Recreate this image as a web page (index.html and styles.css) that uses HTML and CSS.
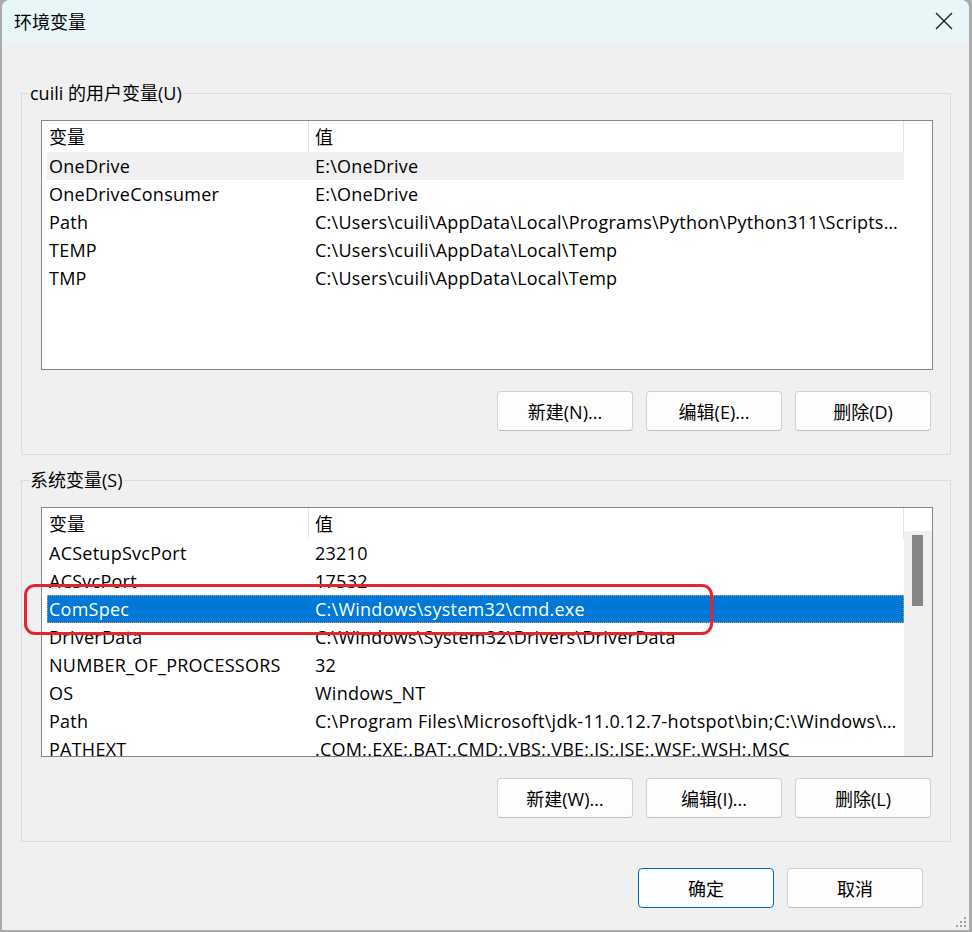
FILE: index.html
```html
<!DOCTYPE html>
<html lang="zh-CN">
<head>
  <meta charset="UTF-8">
  <title>环境变量</title>
  <link rel="stylesheet" href="styles.css">
</head>
<body>
  <div class="window">
    <div class="titlebar">
      <span class="title">环境变量</span>
      <svg class="close" width="18" height="18" viewBox="0 0 18 18">
        <path d="M1 1 L17 17 M17 1 L1 17" stroke="#1b1b1b" stroke-width="1.3" fill="none"/>
      </svg>
    </div>

    <div class="content">
      <fieldset class="group">
        <legend>cuili 的用户变量(U)</legend>
        <div class="listview">
          <div class="lv-main">
            <div class="lv-header">
              <div class="hcol hcol-name">变量</div>
              <div class="hcol hcol-value">值</div>
            </div>
            <div class="lv-rows">
              <div class="row hot"><span>OneDrive</span><span>E:\OneDrive</span></div>
              <div class="row"><span>OneDriveConsumer</span><span>E:\OneDrive</span></div>
              <div class="row"><span>Path</span><span>C:\Users\cuili\AppData\Local\Programs\Python\Python311\Scripts\;C:\Users\cuili\AppData\Local\Programs\Python\Python311\</span></div>
              <div class="row"><span>TEMP</span><span>C:\Users\cuili\AppData\Local\Temp</span></div>
              <div class="row"><span>TMP</span><span>C:\Users\cuili\AppData\Local\Temp</span></div>
            </div>
          </div>
          <div class="lv-side"></div>
        </div>
        <div class="btnrow">
          <button class="btn">新建(N)...</button>
          <button class="btn">编辑(E)...</button>
          <button class="btn">删除(D)</button>
        </div>
      </fieldset>

      <fieldset class="group">
        <legend>系统变量(S)</legend>
        <div class="listview">
          <div class="lv-main">
            <div class="lv-header">
              <div class="hcol hcol-name">变量</div>
              <div class="hcol hcol-value">值</div>
            </div>
            <div class="lv-rows">
              <div class="row"><span>ACSetupSvcPort</span><span>23210</span></div>
              <div class="row"><span>ACSvcPort</span><span>17532</span></div>
              <div class="row selected"><span>ComSpec</span><span>C:\Windows\system32\cmd.exe</span></div>
              <div class="row"><span>DriverData</span><span>C:\Windows\System32\Drivers\DriverData</span></div>
              <div class="row"><span>NUMBER_OF_PROCESSORS</span><span>32</span></div>
              <div class="row"><span>OS</span><span>Windows_NT</span></div>
              <div class="row"><span>Path</span><span>C:\Program Files\Microsoft\jdk-11.0.12.7-hotspot\bin;C:\Windows\system32;C:\Windows</span></div>
              <div class="row"><span>PATHEXT</span><span>.COM;.EXE;.BAT;.CMD;.VBS;.VBE;.JS;.JSE;.WSF;.WSH;.MSC</span></div>
            </div>
          </div>
          <div class="lv-side">
            <div class="scrolltrack"><div class="thumb"></div></div>
          </div>
        </div>
        <div class="btnrow">
          <button class="btn">新建(W)...</button>
          <button class="btn">编辑(I)...</button>
          <button class="btn">删除(L)</button>
        </div>
      </fieldset>

      <div class="footer">
        <button class="btn default">确定</button>
        <button class="btn">取消</button>
      </div>
    </div>

    <!-- 标注框 -->
    <div class="mark"></div>

    <svg class="grip" width="12" height="12" viewBox="0 0 12 12">
      <rect x="9" y="1" width="2" height="2" fill="#a0a0a0"/>
      <rect x="5" y="5" width="2" height="2" fill="#a0a0a0"/>
      <rect x="9" y="5" width="2" height="2" fill="#a0a0a0"/>
      <rect x="1" y="9" width="2" height="2" fill="#a0a0a0"/>
      <rect x="5" y="9" width="2" height="2" fill="#a0a0a0"/>
      <rect x="9" y="9" width="2" height="2" fill="#a0a0a0"/>
    </svg>
  </div>
</body>
</html>
```

FILE: styles.css
```css
body { margin: 0; background: #ababab; font-family: "Open Sans", "Noto Sans CJK SC", sans-serif; font-size: 18px; color: #000; }
.window { position: relative; margin-left: 2px; width: 967px; height: 930px; background: #f0f0f0; border-radius: 8px 8px 0 0; overflow: hidden; }

.titlebar { height: 43px; background: #e9f6f8; display: flex; align-items: center; justify-content: space-between; padding: 0 16px 0 12px; }
.title { font-size: 18px; margin-top: -2px; }
.close { display: block; margin-top: -1px; }

.content { padding: 0 18px 0 19px; }

/* 分组框 */
.group { margin: 38px 0 0 0; border: 1px solid #dcdcdc; padding: 0 17px 23px 7px; min-width: 0; }
.group + .group { margin-top: 13px; }
.group legend { padding: 0 1px; line-height: 24px; height: 24px; box-sizing: border-box; font-size: 18px; }

/* 列表 */
.listview { margin: 15px 0 0 12px; height: 248px; border: 1px solid #828790; background: #fff; display: flex; overflow: hidden; }
.lv-main { flex: 1; min-width: 0; }
.lv-header { height: 31px; display: flex; }
.hcol { line-height: 32px; white-space: nowrap; }
.hcol-name { width: 259px; padding-left: 7px; border-right: 1px solid #e5e5e5; }
.hcol-value { flex: 1; padding-left: 6px; border-right: 1px solid #e5e5e5; }
.lv-rows { padding-left: 5px; }
.row { display: grid; grid-template-columns: 268px 1fr; height: 28px; line-height: 29px; white-space: nowrap; letter-spacing: 0.25px; }
.row span { overflow: hidden; text-overflow: ellipsis; }
.row span:first-child { padding-left: 2px; }
.row span:last-child { padding-right: 4px; }
.row.hot { background: #f0f0f0; }
.row.selected { background: #0078d7; color: #fff; outline: 1px dotted #d9a066; outline-offset: -1px; }

.lv-side { width: 28px; display: flex; flex-direction: column; }
.scrolltrack { margin-top: 23px; flex: 1; background: #f0f0f0; padding: 4px 0 0 8px; }
.thumb { width: 11px; height: 71px; background: #858585; }

/* 按钮 */
.btnrow { display: flex; justify-content: flex-end; gap: 13px; margin: 21px 2px 0 0; }
.btn { width: 136px; height: 40px; background: #fdfdfd; border: 1px solid #d0d0d0; border-bottom-color: #bfbfbf; border-radius: 4px; font-family: inherit; font-size: 18px; color: #000; padding: 0; }
.btn.default { border-color: #0067c0; }
.footer { display: flex; justify-content: flex-end; gap: 13px; margin: 26px 28px 0 0; }

.mark { position: absolute; left: 22px; top: 584px; width: 683px; height: 45px; border: 3px solid #e4252d; border-radius: 11px; }
.grip { position: absolute; right: 2px; bottom: 2px; }
```
